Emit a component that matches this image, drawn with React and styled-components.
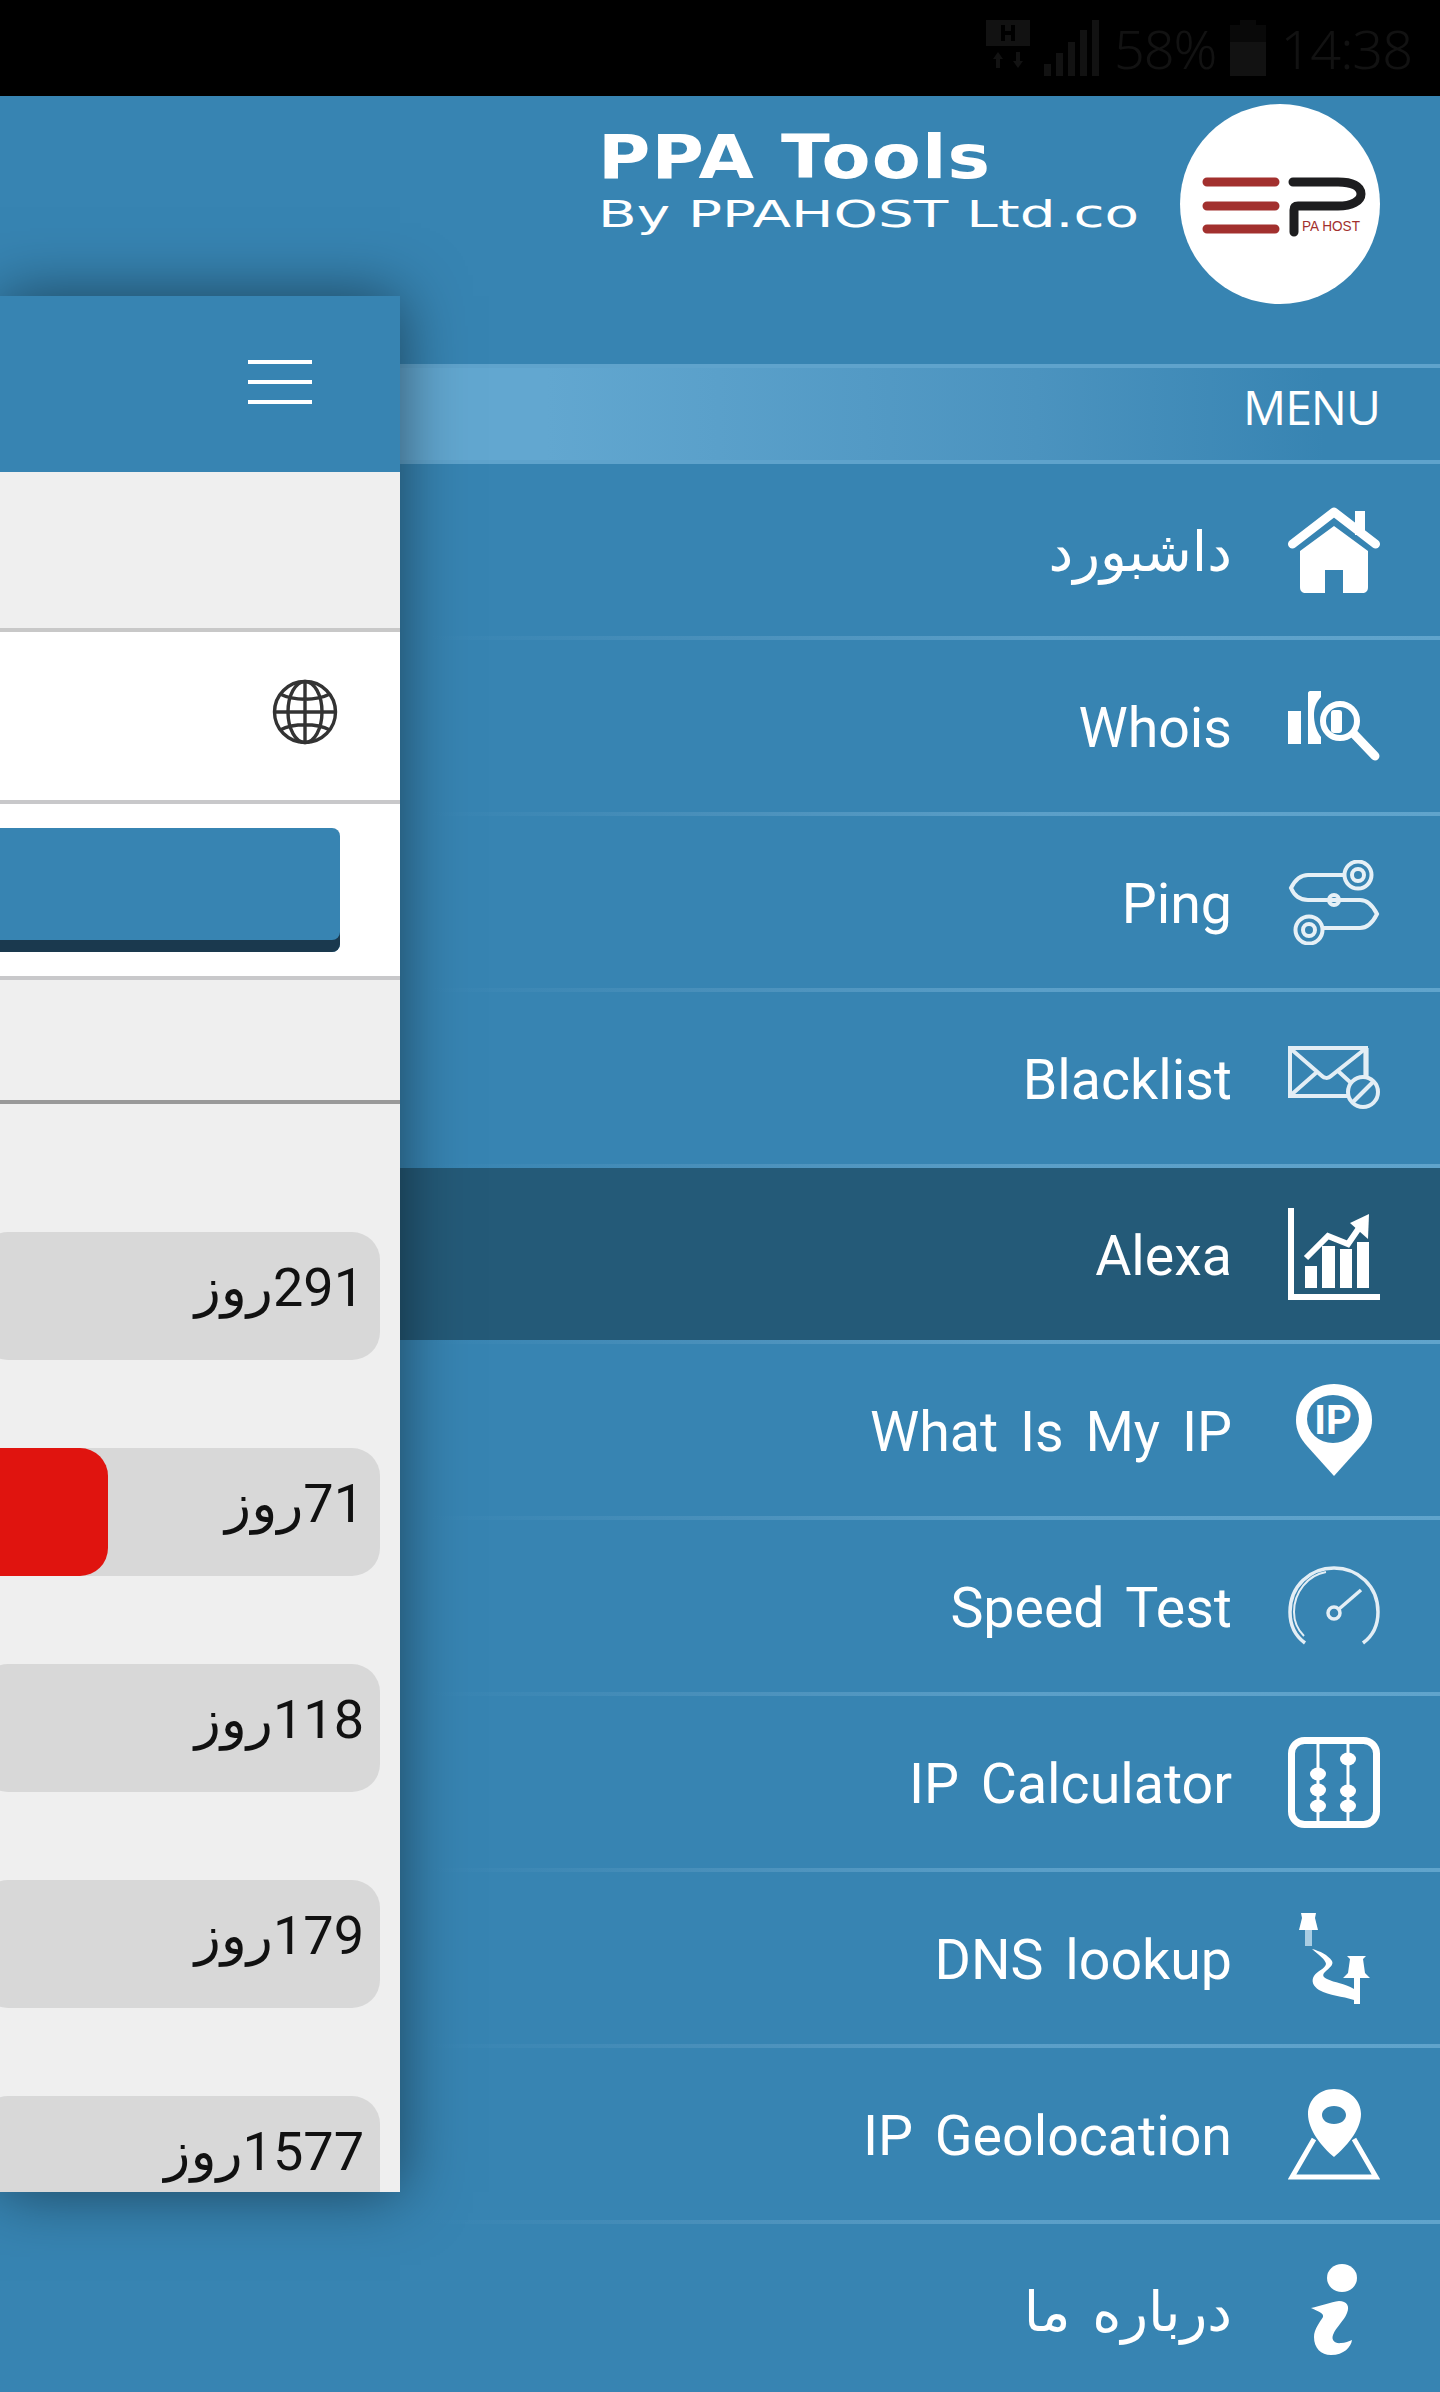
import styled, { createGlobalStyle } from "styled-components"

const GlobalStyle = createGlobalStyle`
    html, body {
        margin: 0;
        padding: 0;
        background: #3784b2;
    }
    * {
        box-sizing: border-box;
    }
`
const Page = styled.div`
    position: relative;
    width: 1440px;
    height: 2392px;
    overflow: hidden;
    background: #3784b2;
    font-family: Roboto, "DejaVu Sans", sans-serif;
`
const StatusBar = styled.div`
    height: 96px;
    background: #000;
    display: flex;
    justify-content: flex-end;
    align-items: center;
    gap: 14px;
    padding: 0 28px 0 0;
    color: #121212;
`
const StatusText = styled.span`
    font-family: "Noto Sans", sans-serif;
    font-weight: 300;
    font-size: 54px;
    line-height: 96px;
    letter-spacing: -1px;
`
const Header = styled.header`
    height: 268px;
    display: flex;
    justify-content: flex-end;
    align-items: flex-start;
    gap: 42px;
    padding: 8px 60px 0 0;
`
const Brand = styled.div`
    width: 540px;
    padding-top: 18px;
    color: #fff;
    font-family: "DejaVu Sans", sans-serif;
`
const BrandTitle = styled.div`
    font-size: 60px;
    line-height: 70px;
    font-weight: bold;
    letter-spacing: 1px;
    white-space: nowrap;
    transform: scaleX(1.19);
    transform-origin: left center;
`
const BrandSub = styled.div`
    font-size: 38px;
    line-height: 44px;
    white-space: nowrap;
    transform: scaleX(1.485);
    transform-origin: left center;
`
const LogoCircle = styled.div`
    width: 200px;
    height: 200px;
    border-radius: 50%;
    background: #fff;
    display: flex;
    align-items: center;
    justify-content: center;
    padding: 6px 0 0 8px;
`
const MenuBar = styled.div`
    height: 100px;
    border-top: 4px solid #5fa3cc;
    border-bottom: 4px solid #5fa3cc;
    background: linear-gradient(to right, #62a7d0 0, #62a7d0 38%, #4b93bf 72%, #3784b2 92%);
    display: flex;
    justify-content: flex-end;
    align-items: center;
    padding: 0 60px 16px 0;
    color: #fff;
    font-family: "Open Sans", sans-serif;
    font-size: 48px;
    letter-spacing: -1px;
`
const MenuRow = styled.div`
    height: 176px;
    display: flex;
    justify-content: flex-end;
    align-items: center;
    gap: 56px;
    padding-right: 60px;
    color: #fff;
    background: ${props => (props.$active ? "#245a78" : "transparent")};
    border-bottom: 4px solid;
    border-image: linear-gradient(to right, #3784b2 30%, #4a90bb 50%, #5b9fc8 72%, #60a4cc 100%) 1;
`
const MenuLabel = styled.span`
    font-size: 55.5px;
    word-spacing: 8px;
    white-space: nowrap;
    line-height: 1;
    padding-top: 6px;
`
const IconBox = styled.div`
    width: 92px;
    height: 92px;
    display: flex;
    align-items: center;
    justify-content: center;
    flex: none;
`
const Panel = styled.div`
    position: absolute;
    left: 0;
    top: 296px;
    width: 400px;
    height: 1896px;
    overflow: hidden;
    background: #efefef;
    box-shadow: 0 0 60px rgba(0, 0, 0, 0.5);
`
const PanelHeader = styled.div`
    height: 176px;
    background: #3784b2;
    display: flex;
    justify-content: flex-end;
    align-items: center;
    padding: 0 88px 0 0;
`
const Burger = styled.div`
    width: 64px;
    display: flex;
    flex-direction: column;
    gap: 16px;
    margin-top: -4px;
`
const BurgerBar = styled.span`
    height: 4px;
    background: #fff;
`
const GraySpace = styled.div`
    height: 160px;
    border-bottom: 4px solid #c8c8c8;
`
const DomainRow = styled.div`
    height: 172px;
    background: #fff;
    border-bottom: 4px solid #c8c8ca;
    display: flex;
    justify-content: flex-end;
    align-items: center;
    padding: 0 62px 8px 0;
`
const ButtonRow = styled.div`
    height: 176px;
    background: #fff;
    border-bottom: 4px solid #c8c8ca;
    padding-top: 24px;
`
const BigButton = styled.div`
    width: 340px;
    height: 124px;
    background: #3784b2;
    border-radius: 0 8px 8px 0;
    box-shadow: inset 0 -12px 0 #1a394e;
`
const FilterSpace = styled.div`
    height: 124px;
    border-bottom: 4px solid #999;
`
const BarList = styled.div`
    padding-top: 128px;
    display: flex;
    flex-direction: column;
    gap: 88px;
`
const Track = styled.div`
    width: 400px;
    height: 128px;
    margin-left: -20px;
    flex: none;
    background: #d8d8d8;
    border-radius: 28px;
    display: flex;
    justify-content: space-between;
    align-items: stretch;
`
const Fill = styled.div`
    background: #e0140f;
    border-radius: 0 28px 28px 0;
`
const Days = styled.span`
    margin-left: auto;
    direction: rtl;
    padding: 16px 16px 0 0;
    color: #111;
    font-size: 54px;
    line-height: 80px;
    font-family: Roboto, "DejaVu Sans", sans-serif;
    white-space: nowrap;
`

const HomeIcon = () => (
    <svg width="92" height="86" viewBox="0 0 92 86" fill="none">
        <path d="M67 4h10v24H67z" fill="#fff" />
        <path d="M4.500 37 46 5l41.500 32" stroke="#fff" strokeWidth="9" strokeLinecap="round" strokeLinejoin="round" />
        <path d="M46 19 80 44v36c0 4-2 6-6 6H55V63H37v23H18c-4 0-6-2-6-6V44z" fill="#fff" />
    </svg>
)
const WhoisIcon = () => (
    <svg width="92" height="70" viewBox="0 0 92 70" fill="none">
        <rect x="0" y="20" width="13" height="33" fill="#fff" />
        <path d="M20 2c0-1 1-2 2-2h11v6c-5 5-7 11-7 18s2 16 7 22v7H20z" fill="#fff" />
        <rect x="43" y="19" width="11" height="23" rx="3" fill="#fff" />
        <circle cx="52" cy="30" r="17" stroke="#fff" strokeWidth="6" />
        <path d="M66 43 87 65" stroke="#fff" strokeWidth="9" strokeLinecap="round" />
    </svg>
)
const PingIcon = () => (
    <svg width="92" height="85" viewBox="0 0 92 85" fill="none" stroke="#e6f0f6">
        <circle cx="70" cy="15" r="13.500" strokeWidth="4" />
        <circle cx="70" cy="15" r="6" strokeWidth="4" />
        <circle cx="21" cy="70" r="13.500" strokeWidth="4" />
        <circle cx="21" cy="70" r="6" strokeWidth="4" />
        <path d="M56 15H20C12 15 7 20 3 28c3 7 9 12 17 12h52c8 0 13 6 17 14-4 8-9 14-17 14H35" strokeWidth="4" />
        <circle cx="46" cy="40" r="5" strokeWidth="4" />
    </svg>
)
const BlacklistIcon = () => (
    <svg width="92" height="64" viewBox="0 0 92 64" fill="none" stroke="#e3eef5" strokeWidth="4">
        <path d="M60 50H2V2h76v28" />
        <path d="M78 2v28" strokeWidth="6" opacity="0.6" />
        <path d="M3 3 34 30c2 2 6 3 9 0L77 3M3 49 29 26M50 25 62 36" />
        <circle cx="75" cy="46" r="15" />
        <path d="M65 56 85 36" />
    </svg>
)
const AlexaIcon = () => (
    <svg width="92" height="92" viewBox="0 0 92 92" fill="#fff">
        <path d="M0 0h6v86h86v6H0z" />
        <rect x="17" y="58" width="12" height="22" />
        <rect x="34" y="38" width="13" height="42" />
        <rect x="52" y="41" width="12" height="39" />
        <rect x="69" y="34" width="12" height="46" />
        <path d="M18 50 40 28l20 8 11-16" fill="none" stroke="#fff" strokeWidth="6" />
        <path d="M62 15 81 6l-1 25z" />
    </svg>
)
const IpIcon = () => (
    <svg width="76" height="92" viewBox="0 0 76 92">
        <path d="M38 0c21 0 38 15 38 36 0 10-4 18-11 26L38 92 11 62C4 54 0 46 0 36 0 15 17 0 38 0z" fill="#fff" />
        <ellipse cx="37" cy="35" rx="26" ry="24" fill="#3784b2" />
        <text x="37" y="50" textAnchor="middle" fontFamily="Roboto, sans-serif" fontWeight="700" fontSize="40" fill="#fff">IP</text>
    </svg>
)
const SpeedIcon = () => (
    <svg width="92" height="80" viewBox="0 0 92 80" fill="none" stroke="#e3eef5" strokeWidth="3.500">
        <path d="M17 77C6 69 2 58 2 46 2 20 22 2 46 2s44 18 44 44c0 12-4 23-15 31" />
        <path d="M16 70C9 63 6 55 6 46 6 26 20 9 38 6" strokeWidth="2" />
        <circle cx="46" cy="47" r="6" />
        <path d="M51 43 73 24" />
    </svg>
)
const CalcIcon = () => (
    <svg width="92" height="91" viewBox="0 0 92 91" fill="none">
        <rect x="3.500" y="3.500" width="85" height="84" rx="13" stroke="#fff" strokeWidth="7" />
        <path d="M30 5v81M60 5v81" stroke="#fff" strokeWidth="3" />
        <g fill="#fff">
            <ellipse cx="30" cy="37" rx="8" ry="6.500" />
            <ellipse cx="30" cy="53" rx="8" ry="6.500" />
            <ellipse cx="30" cy="69" rx="8" ry="6.500" />
            <ellipse cx="60" cy="22" rx="8" ry="6.500" />
            <ellipse cx="60" cy="54" rx="8" ry="6.500" />
            <ellipse cx="60" cy="69" rx="8" ry="6.500" />
        </g>
    </svg>
)
const DnsIcon = () => (
    <svg width="92" height="91" viewBox="0 0 92 91">
        <path d="M13 0h15l-1 5 3 12H11l3-12z" fill="#fff" />
        <rect x="17" y="17" width="7" height="16" fill="#a9cde3" />
        <path d="M24 36c8 2 16 6 20 12 2 4-3 7-7 11-3 3-2 5 2 7 8 4 17 4 27 10v11c-12-4-24-4-35-10-6-4-8-9-5-14 3-5 11-7 12-12 0-4-8-10-14-15z" fill="#fff" />
        <path d="M59 43h19l-3 3 2 14 5 5H55l5-5 2-14z" fill="#fff" />
        <rect x="66" y="65" width="6" height="26" fill="#fff" />
    </svg>
)
const GeoIcon = () => (
    <svg width="92" height="91" viewBox="0 0 92 91" fill="none">
        <path d="M26 50 4 88h84L66 50" stroke="#fff" strokeWidth="5" />
        <path fillRule="evenodd" d="M46 0c15 0 27 11 27 25 0 16-15 33-27 43C34 58 20 41 20 25 20 11 31 0 46 0zm0 17c-7 0-12 4-12 9s5 9 12 9 12-4 12-9-5-9-12-9z" fill="#fff" />
    </svg>
)
const InfoIcon = () => (
    <svg width="92" height="92" viewBox="0 0 92 92" fill="#fff">
        <ellipse cx="54" cy="14" rx="15" ry="14" />
        <path d="M23 44c9-2 20-6 28-7 8 0 11 5 8 12-3 8-11 14-14 22-2 5 2 9 8 8 4 0 8-2 11-3-1 7-8 15-21 15-10 0-17-7-17-18 0-8 6-15 9-20 1-4-4-5-12-9z" />
    </svg>
)
const GlobeIcon = () => (
    <svg width="66" height="66" viewBox="0 0 66 66" fill="none" stroke="#333" strokeWidth="3.400">
        <circle cx="33" cy="33" r="30.500" />
        <ellipse cx="33" cy="33" rx="17" ry="30.500" />
        <path d="M33 2.500v61M2.500 33h61M8 15c14 7 36 7 50 0M8 51c14-7 36-7 50 0" />
    </svg>
)
const LogoMark = () => (
    <svg width="164" height="60" viewBox="0 0 164 60" fill="none">
        <g stroke="#a2302e" strokeWidth="9" strokeLinecap="round">
            <path d="M5 5h68M5 29h68M5 52h68" />
        </g>
        <path d="M92 55V33c0-3 1-4 4-4h40c14 0 23-5 23-12 0-8-9-12-23-12H91" stroke="#1d1d1f" strokeWidth="9" strokeLinecap="round" strokeLinejoin="round" />
        <text x="100" y="54" fontFamily="'Liberation Sans', sans-serif" fontSize="15" fill="#a2302e" textLength="58" lengthAdjust="spacingAndGlyphs">PA HOST</text>
    </svg>
)

const menuItems = [
    { label: "داشبورد", icon: <HomeIcon /> },
    { label: "Whois", icon: <WhoisIcon /> },
    { label: "Ping", icon: <PingIcon /> },
    { label: "Blacklist", icon: <BlacklistIcon /> },
    { label: "Alexa", icon: <AlexaIcon />, active: true },
    { label: "What Is My IP", icon: <IpIcon /> },
    { label: "Speed Test", icon: <SpeedIcon /> },
    { label: "IP Calculator", icon: <CalcIcon /> },
    { label: "DNS lookup", icon: <DnsIcon /> },
    { label: "IP Geolocation", icon: <GeoIcon /> },
    { label: "درباره ما", icon: <InfoIcon /> },
]

const bars = [
    { days: 291 },
    { days: 71, fill: 128 },
    { days: 118 },
    { days: 179 },
    { days: 1577 },
]

export default function App() {
    return (
        <Page>
            <GlobalStyle />
            <StatusBar>
                <svg width="44" height="56" viewBox="0 0 44 56" fill="#121212">
                    <path d="M0 0h44v26H0zM15 5v16h4v-6h6v6h4V5h-4v6h-6V5z" fillRule="evenodd" />
                    <path d="M12 32l5 7h-3v9h-4v-9H7zM32 48l-5-7h3v-9h4v9h3z" />
                </svg>
                <svg width="56" height="56" viewBox="0 0 56 56" fill="#121212">
                    <rect x="0" y="44" width="7" height="12" />
                    <rect x="12" y="33" width="7" height="23" />
                    <rect x="24" y="22" width="7" height="34" />
                    <rect x="36" y="10" width="7" height="46" />
                    <rect x="48" y="0" width="7" height="56" />
                </svg>
                <StatusText>58%</StatusText>
                <svg width="36" height="56" viewBox="0 0 36 56" fill="#121212">
                    <path d="M10 0h16v5h10v51H0V5h10z" opacity="0.5" />
                    <rect x="0" y="22" width="36" height="34" />
                </svg>
                <StatusText>14:38</StatusText>
            </StatusBar>
            <Header>
                <Brand>
                    <BrandTitle>PPA Tools</BrandTitle>
                    <BrandSub>By PPAHOST Ltd.co</BrandSub>
                </Brand>
                <LogoCircle>
                    <LogoMark />
                </LogoCircle>
            </Header>
            <MenuBar>MENU</MenuBar>
            {menuItems.map(item => (
                <MenuRow key={item.label} $active={item.active}>
                    <MenuLabel>{item.label}</MenuLabel>
                    <IconBox>{item.icon}</IconBox>
                </MenuRow>
            ))}
            <Panel>
                <PanelHeader>
                    <Burger>
                        <BurgerBar />
                        <BurgerBar />
                        <BurgerBar />
                    </Burger>
                </PanelHeader>
                <GraySpace />
                <DomainRow>
                    <GlobeIcon />
                </DomainRow>
                <ButtonRow>
                    <BigButton />
                </ButtonRow>
                <FilterSpace />
                <BarList>
                    {bars.map(bar => (
                        <Track key={bar.days}>
                            {bar.fill ? <Fill style={{ width: bar.fill }} /> : null}
                            <Days>{bar.days}روز</Days>
                        </Track>
                    ))}
                </BarList>
            </Panel>
        </Page>
    )
}
